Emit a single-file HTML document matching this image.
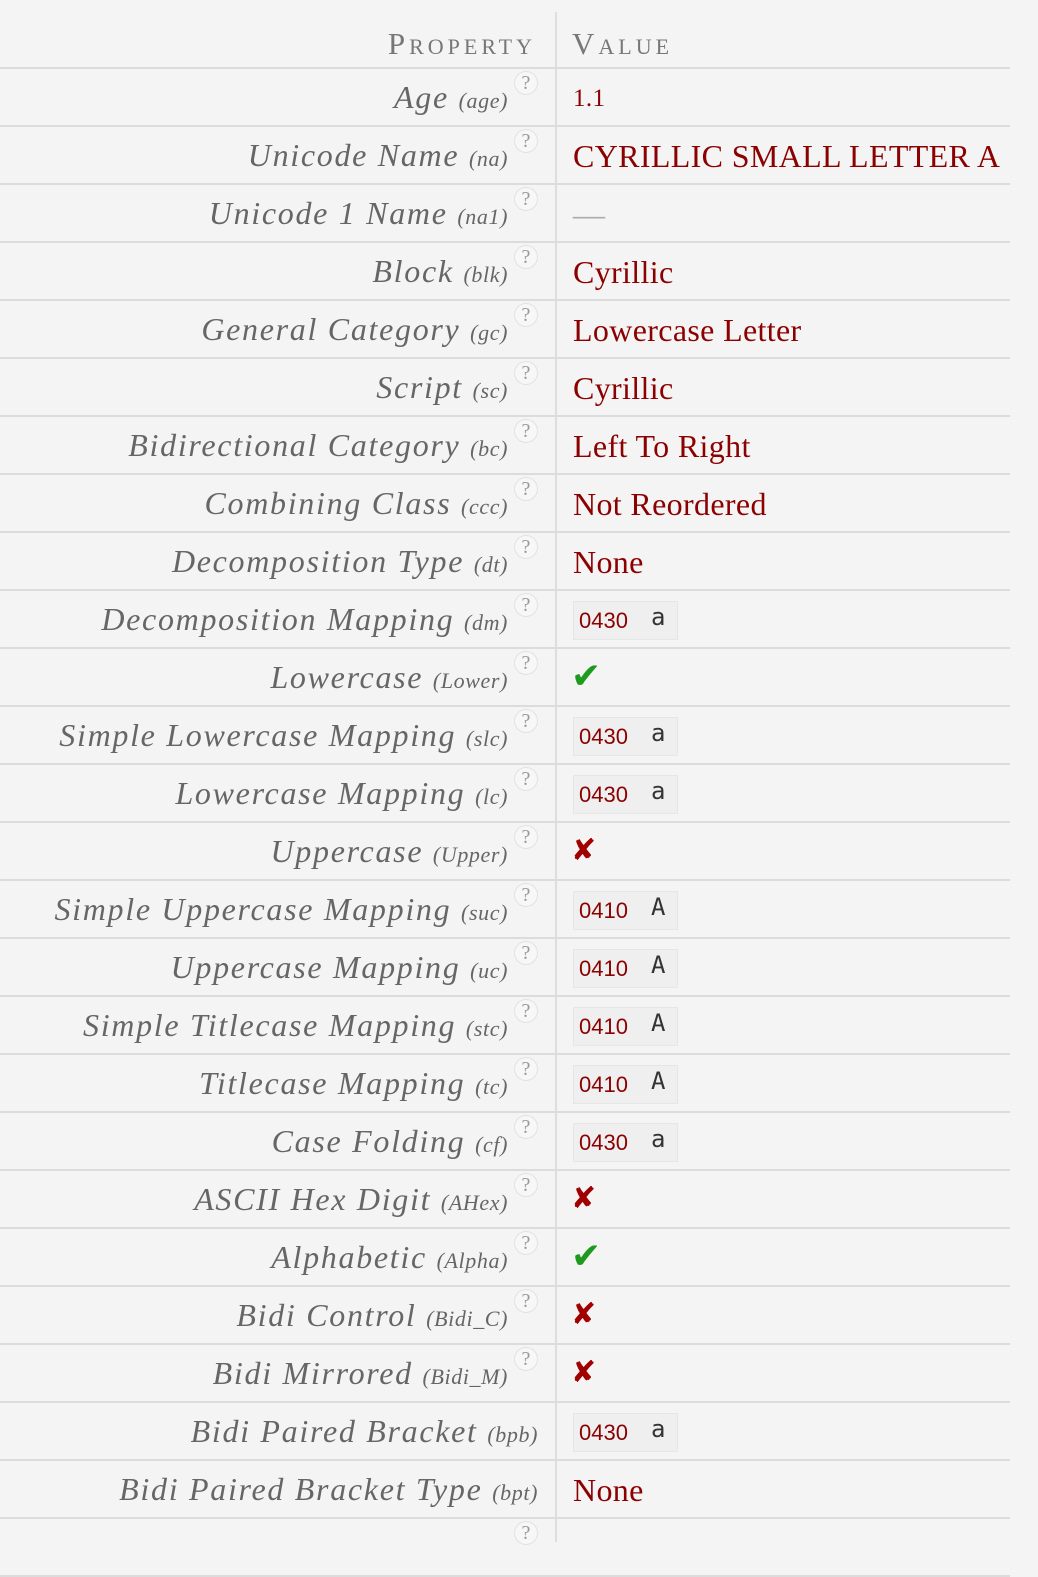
<!DOCTYPE html>
<html><head><meta charset="utf-8"><style>
html,body{margin:0;padding:0;background:#f4f4f4;width:1038px;height:1528px;overflow:hidden;}
.w{position:absolute;left:0;top:0;width:1010px;}
.vl{position:absolute;left:555px;top:12px;width:2px;height:1530px;background:#dedede;}
.hd{position:absolute;top:12px;height:55px;width:1010px;border-bottom:2px solid #dcdcdc;}
.hd .p{position:absolute;right:474px;top:14px;font:22px "Liberation Serif",serif;color:#777;letter-spacing:4px;}
.hd .v{position:absolute;left:572px;top:14px;font:22px "Liberation Serif",serif;color:#777;letter-spacing:4px;}
.hd big{font-size:31px;}
.r{position:relative;height:56px;border-bottom:2px solid #dcdcdc;width:1010px;}
.r .p{position:absolute;right:502px;top:10px;font:italic 32px "Liberation Serif",serif;color:#666;white-space:nowrap;letter-spacing:1.7px;}
.r .p.n{right:472px;}
.r .p small{font-size:22px;letter-spacing:0.6px;}
.q{position:absolute;left:514px;top:2px;width:22px;height:22px;border-radius:50%;border:1px solid #e2e2e2;background:#f7f7f7;font:20px "Liberation Serif",serif;color:#999;text-align:center;line-height:22px;}
.r .v{position:absolute;left:573px;top:11px;font:32px "Liberation Serif",serif;color:#8b0000;white-space:nowrap;letter-spacing:0.35px;}
.c{position:absolute;left:573px;top:10px;width:103px;height:37px;background:#efefef;border:1px solid #e6e6e6;}
.c span{position:absolute;left:5px;top:6px;font:22px "Liberation Sans",sans-serif;color:#8b0000;}
.c b{position:absolute;left:77px;top:1px;font:normal 24px "DejaVu Sans Mono",monospace;color:#333;}
.ok{position:absolute;left:571px;top:7px;font:bold 36px "DejaVu Sans",sans-serif;color:#1e9a1e;}
.no{position:absolute;left:571px;top:10px;font:bold 30px "DejaVu Sans",sans-serif;color:#a00000;}
</style></head><body>
<div class="vl"></div>
<div class="hd"><div class="p"><big>P</big>ROPERTY</div><div class="v"><big>V</big>ALUE</div></div>
<div class="w" style="top:69px">
<div class="r"><div class="p">Age <small>(age)</small></div><div class="q">?</div><div class="v" style="font-size:25px;top:16px">1.1</div></div>
<div class="r"><div class="p">Unicode Name <small>(na)</small></div><div class="q">?</div><div class="v">CYRILLIC SMALL LETTER A</div></div>
<div class="r"><div class="p">Unicode 1 Name <small>(na1)</small></div><div class="q">?</div><div class="v" style="color:#aaa">—</div></div>
<div class="r"><div class="p">Block <small>(blk)</small></div><div class="q">?</div><div class="v">Cyrillic</div></div>
<div class="r"><div class="p">General Category <small>(gc)</small></div><div class="q">?</div><div class="v">Lowercase Letter</div></div>
<div class="r"><div class="p">Script <small>(sc)</small></div><div class="q">?</div><div class="v">Cyrillic</div></div>
<div class="r"><div class="p">Bidirectional Category <small>(bc)</small></div><div class="q">?</div><div class="v">Left To Right</div></div>
<div class="r"><div class="p">Combining Class <small>(ccc)</small></div><div class="q">?</div><div class="v">Not Reordered</div></div>
<div class="r"><div class="p">Decomposition Type <small>(dt)</small></div><div class="q">?</div><div class="v">None</div></div>
<div class="r"><div class="p">Decomposition Mapping <small>(dm)</small></div><div class="q">?</div><div class="c"><span>0430</span><b>а</b></div></div>
<div class="r"><div class="p">Lowercase <small>(Lower)</small></div><div class="q">?</div><div class="ok">✔</div></div>
<div class="r"><div class="p">Simple Lowercase Mapping <small>(slc)</small></div><div class="q">?</div><div class="c"><span>0430</span><b>а</b></div></div>
<div class="r"><div class="p">Lowercase Mapping <small>(lc)</small></div><div class="q">?</div><div class="c"><span>0430</span><b>а</b></div></div>
<div class="r"><div class="p">Uppercase <small>(Upper)</small></div><div class="q">?</div><div class="no">✘</div></div>
<div class="r"><div class="p">Simple Uppercase Mapping <small>(suc)</small></div><div class="q">?</div><div class="c"><span>0410</span><b>А</b></div></div>
<div class="r"><div class="p">Uppercase Mapping <small>(uc)</small></div><div class="q">?</div><div class="c"><span>0410</span><b>А</b></div></div>
<div class="r"><div class="p">Simple Titlecase Mapping <small>(stc)</small></div><div class="q">?</div><div class="c"><span>0410</span><b>А</b></div></div>
<div class="r"><div class="p">Titlecase Mapping <small>(tc)</small></div><div class="q">?</div><div class="c"><span>0410</span><b>А</b></div></div>
<div class="r"><div class="p">Case Folding <small>(cf)</small></div><div class="q">?</div><div class="c"><span>0430</span><b>а</b></div></div>
<div class="r"><div class="p">ASCII Hex Digit <small>(AHex)</small></div><div class="q">?</div><div class="no">✘</div></div>
<div class="r"><div class="p">Alphabetic <small>(Alpha)</small></div><div class="q">?</div><div class="ok">✔</div></div>
<div class="r"><div class="p">Bidi Control <small>(Bidi_C)</small></div><div class="q">?</div><div class="no">✘</div></div>
<div class="r"><div class="p">Bidi Mirrored <small>(Bidi_M)</small></div><div class="q">?</div><div class="no">✘</div></div>
<div class="r"><div class="p n">Bidi Paired Bracket <small>(bpb)</small></div><div class="c"><span>0430</span><b>а</b></div></div>
<div class="r"><div class="p n">Bidi Paired Bracket Type <small>(bpt)</small></div><div class="v">None</div></div>
<div class="r"><div class="q">?</div></div>
</div>
</body></html>
